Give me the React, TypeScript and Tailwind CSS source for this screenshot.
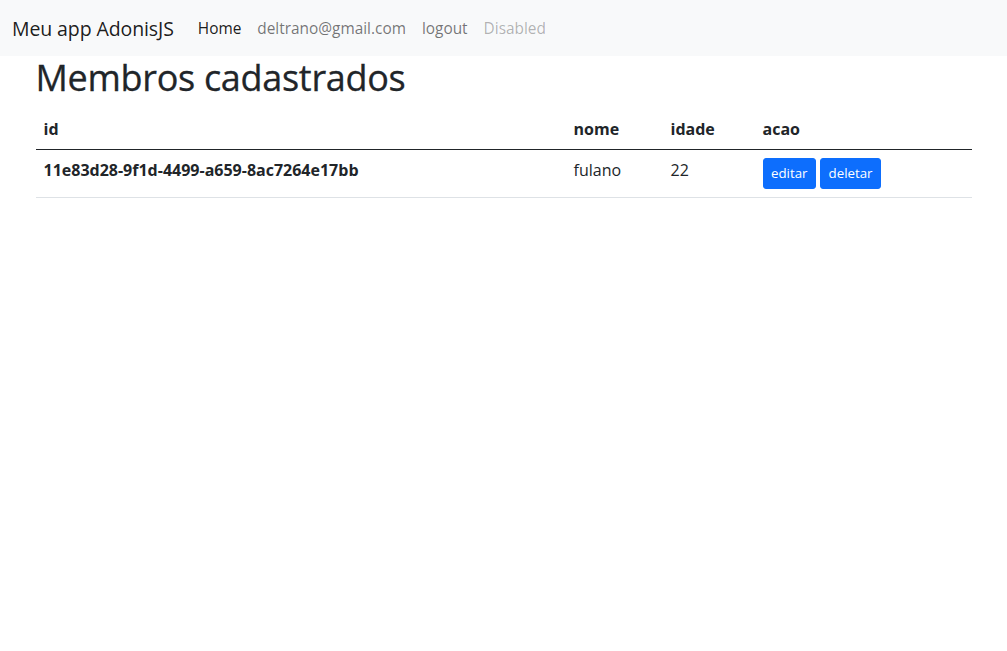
export default function App() {
  return (
    <div className="min-h-[651px] bg-white font-['Open_Sans',sans-serif] text-[#212529]">
      <nav className="flex h-[56px] items-center bg-[#f8f9fa] px-3 pt-[1px]">
        <a className="mr-4 py-[5px] text-[19.5px] leading-[30px] tracking-[-0.1px] text-[rgba(0,0,0,0.9)]">Meu app AdonisJS</a>
        <div className="flex text-[15.4px] leading-6">
          <a className="px-2 py-2 text-[rgba(0,0,0,0.9)]">Home</a>
          <a className="px-2 py-2 text-[rgba(0,0,0,0.55)]">deltrano@gmail.com</a>
          <a className="px-2 py-2 text-[rgba(0,0,0,0.55)]">logout</a>
          <a className="px-2 py-2 text-[rgba(0,0,0,0.3)]">Disabled</a>
        </div>
      </nav>
      <div className="mx-auto w-[960px] px-3">
        <h1 className="mb-2 text-[36px] font-medium leading-[44.5px] tracking-[-0.3px] [-webkit-text-stroke:0.3px_#212529]">Membros cadastrados</h1>
        <table className="w-full border-collapse text-[16px] leading-6">
          <thead>
            <tr className="border-b border-[#212529]">
              <th className="w-[530px] p-2 text-left font-bold">id</th>
              <th className="w-[97px] p-2 text-left font-bold">nome</th>
              <th className="w-[92px] p-2 text-left font-bold">idade</th>
              <th className="p-2 text-left font-bold">acao</th>
            </tr>
          </thead>
          <tbody>
            <tr className="border-b border-[#dee2e6] align-top">
              <th className="p-2 text-left font-bold">11e83d28-9f1d-4499-a659-8ac7264e17bb</th>
              <td className="p-2">fulano</td>
              <td className="p-2">22</td>
              <td className="p-2">
                <div className="flex gap-[4px]">
                  <button className="rounded-[3px] border border-[#0d6efd] bg-[#0d6efd] px-[7.5px] py-1 text-[13.3px] leading-[21px] text-white">editar</button>
                  <button className="rounded-[3px] border border-[#0d6efd] bg-[#0d6efd] px-[7.5px] py-1 text-[13.3px] leading-[21px] text-white">deletar</button>
                </div>
              </td>
            </tr>
          </tbody>
        </table>
      </div>
    </div>
  );
}
